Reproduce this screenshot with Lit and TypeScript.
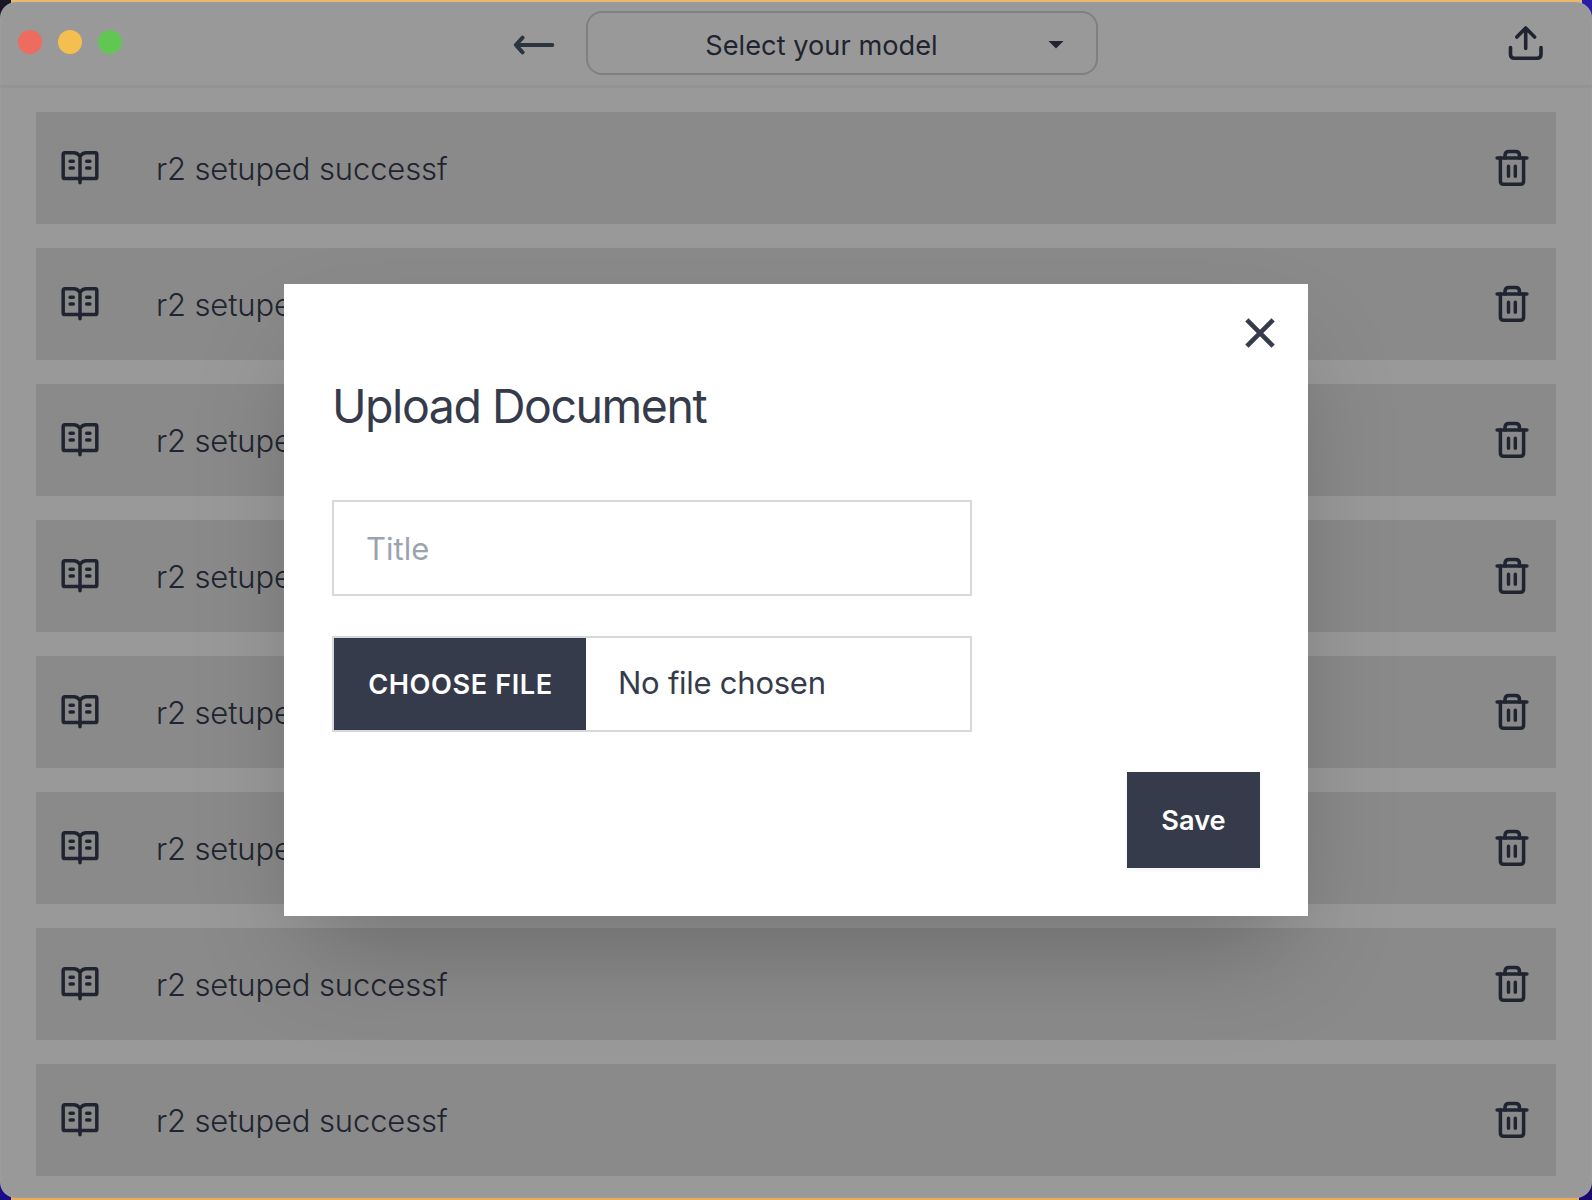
import { LitElement, html, css } from "lit";
import { customElement, property } from "lit/decorators.js";

@customElement("document-row")
export class DocumentRow extends LitElement {
  @property() label = "";

  static styles = css`
    :host {
      display: flex;
      align-items: center;
      height: 112px;
      padding: 0 24px;
      box-sizing: border-box;
      background: #8a8a8a;
      color: #1f2430;
    }
    svg {
      display: block;
      width: 40px;
      height: 40px;
      fill: none;
      stroke: currentColor;
      stroke-width: 3.5;
      stroke-linecap: round;
      stroke-linejoin: round;
    }
    .label {
      flex: 1;
      margin-left: 56px;
      padding-top: 1px;
      font-weight: 300;
      font-size: 31px;
      line-height: 40px;
      letter-spacing: -0.13px;
      white-space: nowrap;
    }
  `;

  render() {
    return html`
      <svg viewBox="0 0 40 40">
        <path d="M20 8.4C18.4 6 16.3 4.8 13.6 4.8H4.7C3.8 4.8 3.2 5.5 3.2 6.4V28.9C3.2 29.8 3.8 30.5 4.7 30.5H17.3C18.8 30.5 20 31.4 20 32.6C20 31.4 21.2 30.5 22.7 30.5H35.3C36.2 30.5 36.8 29.8 36.8 28.9V6.4C36.8 5.5 36.2 4.800 35.300 4.800H26.400C23.700 4.800 21.600 6 20 8.400V34.800" />
        <path d="M10.100 13.300H13.300M10.100 20H13.300M26.700 13.300H29.900M26.700 20H29.900" />
      </svg>
      <div class="label">${this.label}</div>
      <svg viewBox="0 0 40 40">
        <path d="M5.100 10H34.900" />
        <path d="M13 10V7.500Q13 3.600 16.900 3.600H23.600Q27.500 3.600 27.500 7.500V10" />
        <path d="M8.400 10V33Q8.400 36.300 11.700 36.300H28.300Q31.600 36.300 31.600 33V10" />
        <path d="M16.500 18.200V28.300M23.300 18.200V28.300" />
      </svg>
    `;
  }
}

@customElement("upload-dialog")
export class UploadDialog extends LitElement {
  static styles = css`
    :host {
      display: flex;
      flex-direction: column;
      width: 1024px;
      height: 632px;
      padding: 25px 48px 48px;
      box-sizing: border-box;
      background: #fff;
      color: #353b4b;
      box-shadow: 0 50px 100px -24px rgba(0, 0, 0, 0.25);
    }
    .close {
      display: block;
      align-self: flex-end;
      width: 48px;
      height: 48px;
      margin-right: -24px;
      fill: none;
      stroke: currentColor;
      stroke-width: 4.6;
    }
    h3 {
      margin: 21px 0 0;
      font-weight: 400;
      font-size: 46.5px;
      line-height: 56px;
      letter-spacing: -1.48px;
    }
    .field {
      display: flex;
      align-items: center;
      width: 640px;
      height: 96px;
      box-sizing: border-box;
      border: 2px solid #d7d8db;
      font-size: 31px;
    }
    .title {
      margin-top: 66px;
      padding: 1px 0 0 32px;
      color: #9ca3af;
    }
    .file {
      margin-top: 40px;
    }
    .choose {
      display: flex;
      align-items: center;
      justify-content: center;
      align-self: stretch;
      width: 252px;
      box-sizing: border-box;
      padding-left: 1px;
      background: #353b4b;
      color: #fff;
      font-weight: 600;
      font-size: 27.15px;
      letter-spacing: 0.6px;
      white-space: nowrap;
    }
    .status {
      padding: 0 0 3px 32px;
      letter-spacing: -0.26px;
    }
    .save {
      align-self: flex-end;
      width: 133px;
      height: 96px;
      margin-top: 40px;
      border: 0;
      padding: 0;
      background: #353b4b;
      color: #fff;
      font: 600 27.15px Inter, sans-serif;
      box-shadow: 0 2px 4px rgba(0, 0, 0, 0.05);
    }
  `;

  render() {
    return html`
      <svg class="close" viewBox="0 0 48 48">
        <path d="M10.900 10.900L37.100 37.100M37.100 10.900L10.900 37.100" />
      </svg>
      <h3>Upload Document</h3>
      <div class="field title">Title</div>
      <div class="field file">
        <span class="choose">CHOOSE FILE</span>
        <span class="status">No file chosen</span>
      </div>
      <button class="save">Save</button>
    `;
  }
}

@customElement("app-root")
export class AppRoot extends LitElement {
  private documents = Array.from({ length: 8 }, () => "r2 setuped successf");

  static styles = css`
    :host {
      display: block;
      position: relative;
      width: 1592px;
      height: 1200px;
      box-sizing: border-box;
      padding: 2px 0;
      overflow: hidden;
      font-family: Inter, sans-serif;
      background:
        linear-gradient(#171725, #171725) 0 0 / 11px 20px no-repeat,
        linear-gradient(#2b1da8, #2b1da8) 100% 0 / 10px 20px no-repeat,
        linear-gradient(#1b0a8c, #1b0a8c) 0 100% / 11px 20px no-repeat,
        linear-gradient(#1b0a70, #1b0a70) 100% 100% / 13px 20px no-repeat,
        linear-gradient(#e8b872, #e6ad5b);
    }
    .window {
      height: 1196px;
      border-radius: 16px;
      background: #999;
      box-shadow: inset 0 0 2px rgba(220, 220, 220, 0.25);
      overflow: hidden;
    }
    header {
      display: flex;
      align-items: center;
      height: 86px;
      box-sizing: border-box;
      padding: 0 48px 5px 18px;
      border-bottom: 3px solid #939393;
      color: #1f2430;
    }
    .lights {
      display: flex;
      gap: 16px;
      margin-top: 1px;
    }
    .light {
      width: 24px;
      height: 24px;
      border-radius: 50%;
    }
    .red {
      background: #ed6b5f;
    }
    .yellow {
      background: #f5bf4f;
    }
    .green {
      background: #62c655;
    }
    header svg {
      display: block;
      fill: none;
      stroke: currentColor;
      stroke-linecap: round;
      stroke-linejoin: round;
    }
    .back {
      width: 48px;
      height: 24px;
      margin: 7px 0 0 388px;
      color: #2c343f;
      stroke-width: 4;
    }
    .select {
      display: flex;
      align-items: center;
      width: 512px;
      height: 64px;
      margin: 4px 0 0 28px;
      box-sizing: border-box;
      border: 2px solid #808080;
      border-radius: 16px;
      padding: 5px 32px 0 30px;
      font-size: 27.15px;
      letter-spacing: 0.05px;
    }
    .select-label {
      flex: 1;
      text-align: center;
      padding-right: 23px;
    }
    .caret {
      width: 16px;
      height: 8px;
      background: currentColor;
      clip-path: polygon(0 0, 100% 0, 50% 100%);
      margin-top: -2px;
    }
    .upload {
      width: 36px;
      height: 36px;
      margin: 3px 0 0 auto;
      stroke-width: 3.600;
    }
    main {
      display: flex;
      flex-direction: column;
      gap: 24px;
      padding: 24px 36px 0;
    }
    .overlay {
      position: absolute;
      inset: 0;
      display: flex;
      align-items: center;
      justify-content: center;
    }
  `;

  render() {
    return html`
      <div class="window">
        <header>
          <div class="lights">
            <span class="light red"></span>
            <span class="light yellow"></span>
            <span class="light green"></span>
          </div>
          <svg class="back" viewBox="0 0 48 24">
            <path d="M42.300 12H6M12.600 4.700L5.800 12L12.600 19.300" />
          </svg>
          <div class="select">
            <span class="select-label">Select your model</span>
            <span class="caret"></span>
          </div>
          <svg class="upload" viewBox="0 0 36 36">
            <path d="M17.700 23.500V3M8.800 12L17.700 3L26.600 12M2.500 22.500V29.200Q2.500 33.200 6.500 33.200H29Q33 33.200 33 29.200V22.500" />
          </svg>
        </header>
        <main>
          ${this.documents.map((d) => html`<document-row .label=${d}></document-row>`)}
        </main>
      </div>
      <div class="overlay"><upload-dialog></upload-dialog></div>
    `;
  }
}
